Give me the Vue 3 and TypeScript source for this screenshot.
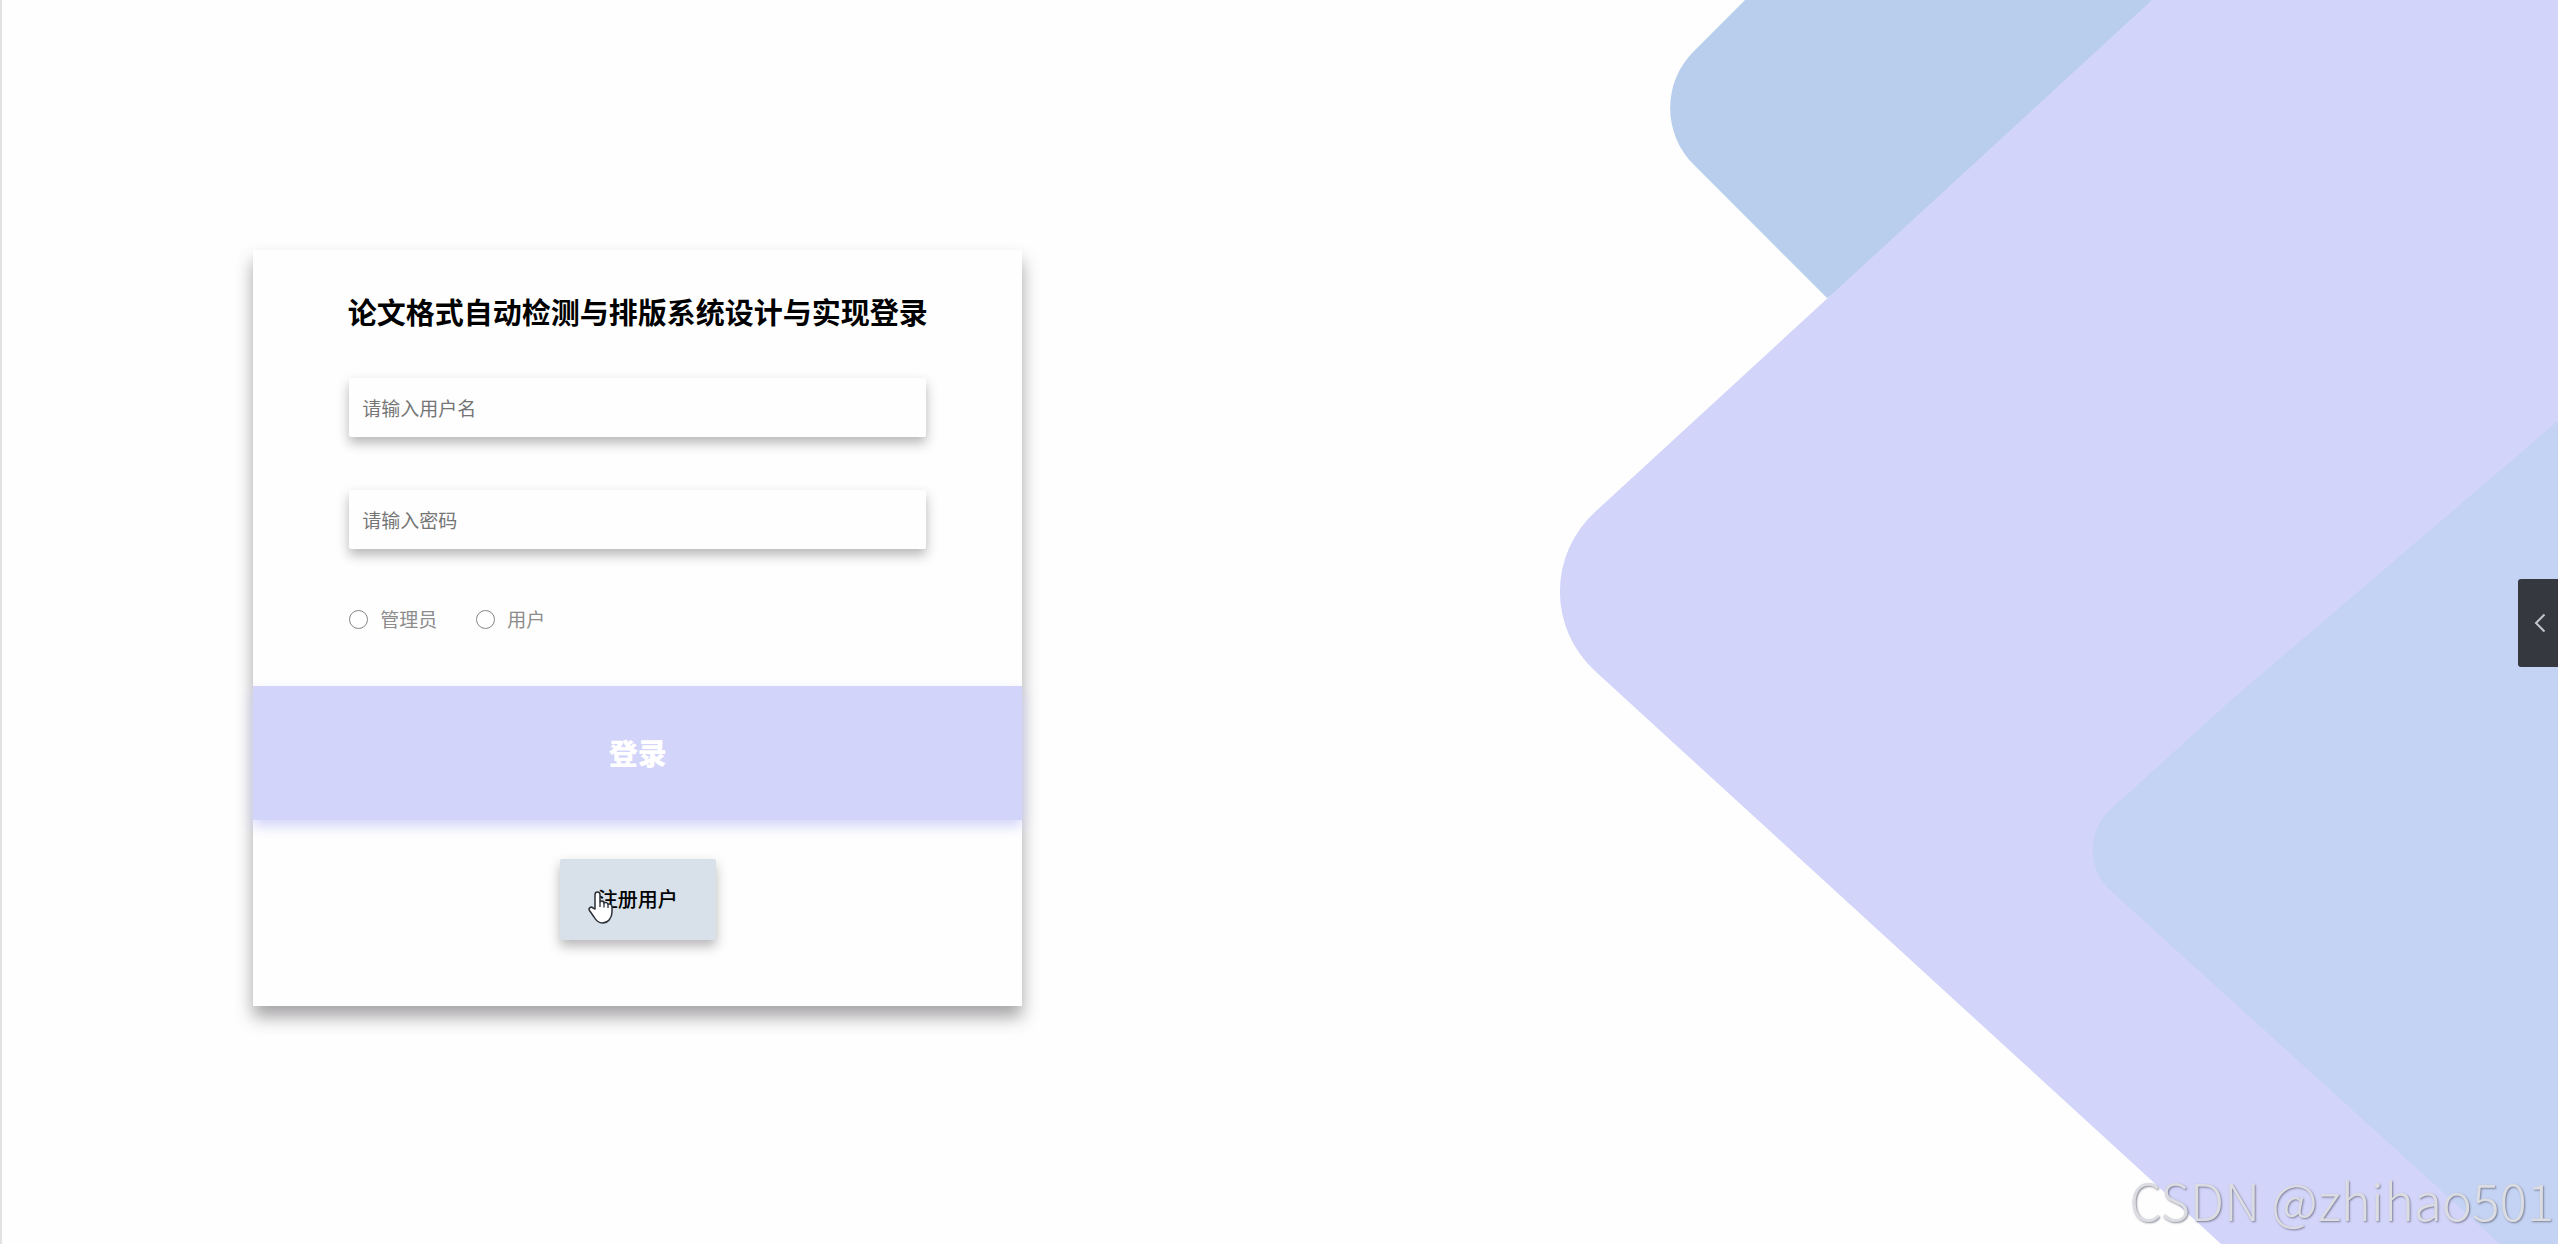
<script setup lang="ts">
import { ref } from 'vue'

interface Role {
  value: string
  label: string
}

const roles: Role[] = [
  { value: 'admin', label: '管理员' },
  { value: 'user', label: '用户' },
]

const username = ref('')
const password = ref('')
const role = ref('')
</script>

<template>
  <div class="page">
    <svg class="backdrop" viewBox="0 0 1058 1244" preserveAspectRatio="xMaxYMid slice" aria-hidden="true">
      <path fill="#b8ceec" d="M245 0 L193.600 51.400 A80 80 0 0 0 193.600 164.600 L327 298 L800 0 Z" />
      <path fill="#d2d4f9" d="M652 0 L95 512 A107.600 107.600 0 0 0 95 671 L721 1244 H1058 V0 Z" />
      <path fill="#c4d3f3" d="M1058 421 L730 701 L611 809 A55 55 0 0 0 611 891 L1000 1244 H1058 Z" />
    </svg>

    <main class="content">
      <form class="card" @submit.prevent>
        <h1 class="title">论文格式自动检测与排版系统设计与实现登录</h1>
        <div class="fields">
          <input v-model="username" class="field" type="text" placeholder="请输入用户名" aria-label="用户名" />
          <input v-model="password" class="field" type="password" placeholder="请输入密码" aria-label="密码" />
          <div class="roles">
            <label v-for="item in roles" :key="item.value" class="role">
              <input v-model="role" class="radio" type="radio" name="role" :value="item.value" />
              <span>{{ item.label }}</span>
            </label>
          </div>
        </div>
        <button class="login" type="submit">登录</button>
        <div class="footer">
          <button class="register" type="button">
            注册用户
            <svg class="pointer" viewBox="0 0 25 34" aria-hidden="true">
              <path
                d="M7 19 V4.500 C7 1 12 1 12 4.500 V12 C13 10.500 16 11 16 13 C17 12 20 12.500 20 14.500 C21.500 13.500 24 14.500 24 17 V22 C24 28 20 33 14.500 33 C10 33 8 30.500 6 27 L1.500 20.500 C0 18 3 16 5 18 Z"
                fill="#fff" stroke="#2b3038" stroke-width="1.500" stroke-linejoin="round"
              />
              <path d="M12 12 V17 M16 13 V17.500 M20 14.500 V18" fill="none" stroke="#2b3038" stroke-width="1.300" />
            </svg>
          </button>
        </div>
      </form>
    </main>

    <button class="drawer" type="button" aria-label="展开侧栏">
      <svg viewBox="0 0 12 20" aria-hidden="true">
        <path d="M10.500 1.500 L2 10 L10.500 18.500" fill="none" stroke="#c4c5c8" stroke-width="2" />
      </svg>
    </button>
    <div class="watermark">CSDN @zhihao501</div>
  </div>
</template>

<style>
body {
  margin: 0;
}
</style>

<style scoped>
.page {
  position: relative;
  box-sizing: border-box;
  min-height: 100vh;
  overflow: hidden;
  border-left: 2px solid #e2e2e3;
  background: #fefefe;
  font-family: "Noto Sans CJK SC", sans-serif;
}

.backdrop {
  position: absolute;
  top: 0;
  right: 0;
  height: 100%;
}

.content {
  position: relative;
  padding: 250px 0 0 251px;
}

.card {
  width: calc(30vw + 2px);
  min-width: 640px;
  background: #fefefe;
  box-shadow: 0 11px 16px rgba(60, 55, 60, 0.45);
}

.title {
  margin: 0;
  padding-top: 39px;
  color: #000;
  font-size: 29px;
  font-weight: 700;
  line-height: 44px;
  text-align: center;
  white-space: nowrap;
}

.fields {
  display: flex;
  flex-direction: column;
  gap: 53px;
  width: 75%;
  margin: 0 auto;
  padding: 45px 0 52px;
}

.field {
  box-sizing: border-box;
  width: 100%;
  height: 59px;
  padding: 0 13px;
  border: 0;
  border-radius: 2px;
  outline: 0;
  background: #fefefe;
  box-shadow: 0 6px 12px rgba(60, 55, 60, 0.36);
  color: #333;
  font: inherit;
  font-size: 19px;
}

.field::placeholder {
  color: #757575;
  opacity: 1;
}

.roles {
  display: flex;
  gap: 39px;
  padding-top: 2px;
}

.role {
  display: flex;
  align-items: center;
  gap: 12px;
  color: #8c8c8c;
  font-size: 19px;
  line-height: 30px;
}

.radio {
  width: 19px;
  height: 19px;
  margin: 0;
  border: 1px solid #858585;
  border-radius: 50%;
  background: #fff;
  appearance: none;
}

.radio:checked {
  border: 6px solid #8a90e8;
}

.login {
  position: relative;
  display: block;
  width: 100%;
  height: 134px;
  padding: 0 0 2px;
  border: 0;
  background: #d2d4f9;
  box-shadow: 0 6px 12px #d2d4f9;
  color: #fff;
  font: inherit;
  font-size: 29px;
  font-weight: 900;
}

.footer {
  display: flex;
  justify-content: center;
  padding: 39px 0 66px;
}

.register {
  position: relative;
  width: 156px;
  height: 81px;
  padding: 0 0 2px;
  border: 0;
  border-radius: 2px;
  background: #d8e0e9;
  box-shadow: 0 6px 12px rgba(60, 55, 60, 0.36);
  color: #000;
  font: inherit;
  font-size: 20px;
  font-weight: 500;
}

.pointer {
  position: absolute;
  top: 31px;
  left: 28px;
  width: 25px;
  height: 34px;
}

.drawer {
  position: absolute;
  top: 579px;
  right: 0;
  display: flex;
  align-items: center;
  width: 40px;
  height: 88px;
  padding: 0 0 0 16px;
  border: 0;
  border-radius: 3px 0 0 3px;
  background: #363840;
}

.drawer svg {
  width: 12px;
  height: 20px;
}

.watermark {
  position: absolute;
  right: 4px;
  bottom: 8px;
  color: #dcdde2;
  font-size: 51px;
  font-weight: 300;
  line-height: 74px;
  text-shadow: 1px 1px 2px rgba(90, 90, 110, 0.7);
  white-space: nowrap;
}
</style>
